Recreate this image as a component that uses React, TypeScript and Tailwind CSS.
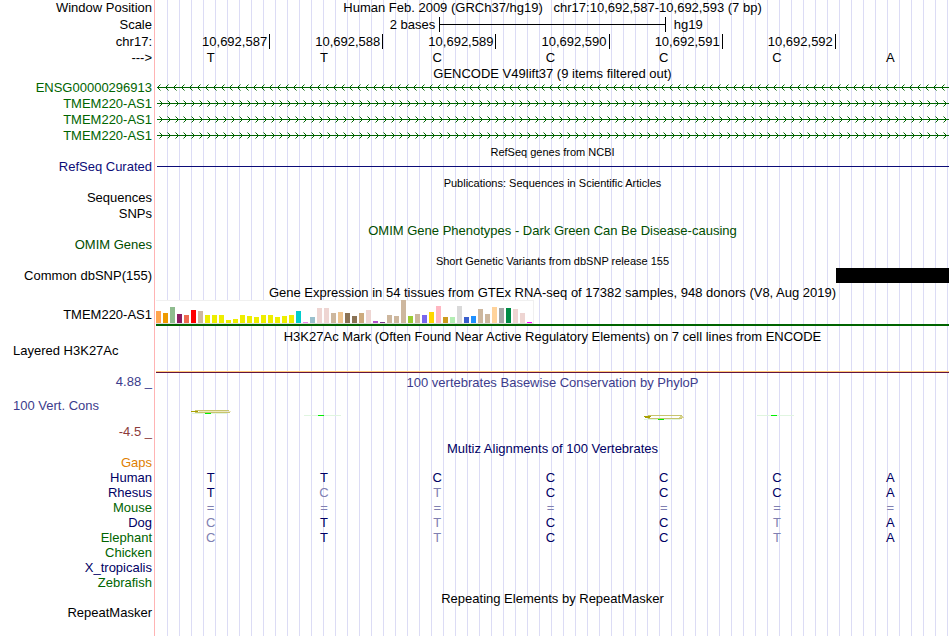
import type { ReactNode } from "react";

const START = 10692587;

const geneTracks = [
  { name: "ENSG00000296913", strand: "-" },
  { name: "TMEM220-AS1", strand: "+" },
  { name: "TMEM220-AS1", strand: "+" },
  { name: "TMEM220-AS1", strand: "+" },
];

// [colour, height in px] for each GTEx tissue
const tissues: [string, number][] = [
  ["#ffa54f", 12], ["#ee9a00", 10], ["#8fbc8f", 16], ["#8b1c62", 9], ["#ee6a50", 8],
  ["#ff0000", 13], ["#cdb79e", 12], ["#eeee00", 8], ["#eeee00", 8], ["#eeee00", 8],
  ["#eeee00", 3], ["#eeee00", 4], ["#eeee00", 8], ["#eeee00", 7], ["#eeee00", 6],
  ["#eeee00", 8], ["#eeee00", 8], ["#eeee00", 6], ["#eeee00", 7], ["#eeee00", 8],
  ["#00cdcd", 12], ["#ee82ee", 1], ["#9ac0cd", 6], ["#eed5d2", 15], ["#eed5d2", 15],
  ["#cdb79e", 10], ["#eec591", 11], ["#8b7355", 10], ["#8b7355", 7], ["#cdaa7d", 10],
  ["#eed5d2", 13], ["#b452cd", 2], ["#7a378b", 1], ["#cdb79e", 8], ["#cdb79e", 7],
  ["#cdb79e", 23], ["#9acd32", 7], ["#cdb79e", 9], ["#7a67ee", 8], ["#ffd700", 11],
  ["#ffb6c1", 17], ["#cd9b1d", 6], ["#b4eeb4", 6], ["#d9d9d9", 17], ["#3a5fcd", 6],
  ["#1e90ff", 7], ["#cdb79e", 14], ["#cdb79e", 9], ["#ffd39b", 16], ["#a6a6a6", 15],
  ["#008b45", 15], ["#eed5d2", 14], ["#eed5d2", 10], ["#ff00ff", 1],
];

// lower case = differs from human, drawn faded
const alignments = [
  { name: "Gaps", bases: "", color: "text-[#e08000]" },
  { name: "Human", bases: "TTCCCCA", color: "text-[#000064]" },
  { name: "Rhesus", bases: "TctCCCA", color: "text-[#000064]" },
  { name: "Mouse", bases: "=======", color: "text-[#006400]" },
  { name: "Dog", bases: "cTtCCtA", color: "text-[#000064]" },
  { name: "Elephant", bases: "cTtCCtA", color: "text-[#006400]" },
  { name: "Chicken", bases: "", color: "text-[#006400]" },
  { name: "X_tropicalis", bases: "", color: "text-[#000064]" },
  { name: "Zebrafish", bases: "", color: "text-[#006400]" },
];

type RowProps = {
  label?: ReactNode;
  color?: string;
  height?: string;
  children?: ReactNode;
};

function Row({ label, color = "text-black", height = "h-4", children }: RowProps) {
  return (
    <div className={`grid grid-cols-[154px_minmax(0,1fr)] ${height}`}>
      <div className={`pr-0.5 text-right ${color}`}>{label}</div>
      <div className="pl-0.5">{children}</div>
    </div>
  );
}

type TitleProps = { children: ReactNode; color?: string; small?: boolean };

function Title({ children, color = "text-black", small = false }: TitleProps) {
  return (
    <Row height="h-[15px]">
      <h2 className={`text-center whitespace-pre ${color} ${small ? "text-[11px]" : "leading-[18px]"}`}>
        {children}
      </h2>
    </Row>
  );
}

function StrandLine({ index, strand }: { index: number; strand: string }) {
  const id = `strand-${index}`;
  return (
    <svg className="block h-4 w-full" shapeRendering="crispEdges" aria-hidden="true">
      <defs>
        <pattern id={id} width="8" height="16" patternUnits="userSpaceOnUse">
          {strand === "-" ? (
            <path d="M1 7h1v1h-1zM2 6h1v1h-1zM2 8h1v1h-1zM3 5h1v1h-1zM3 9h1v1h-1z" fill="#006400" />
          ) : (
            <path d="M6 7h1v1h-1zM5 6h1v1h-1zM5 8h1v1h-1zM4 5h1v1h-1zM4 9h1v1h-1z" fill="#006400" />
          )}
          <path
            d={strand === "-" ? "M4 4h1v1h-1zM4 10h1v1h-1z" : "M3 4h1v1h-1zM3 10h1v1h-1z"}
            fill="#006400"
            fillOpacity="0.5"
          />
        </pattern>
      </defs>
      <rect width="100%" height="16" fill={`url(#${id})`} />
      <rect x="1" y="7" width="100%" height="1" fill="#006400" />
    </svg>
  );
}

function Bases({ bases, color }: { bases: string; color: string }) {
  return (
    <div className={`grid grid-cols-7 text-center ${color}`}>
      {bases.split("").map((base, i) => (
        <span key={i} className={`pr-1 ${/[a-z=]/.test(base) ? "text-[#8080b2]" : ""}`}>
          {base.toUpperCase()}
        </span>
      ))}
    </div>
  );
}

function ConservationMark({ kind }: { kind: string }) {
  if (kind === "none") return null;
  return (
    <svg className="mx-auto block" width="40" height="34" shapeRendering="crispEdges" aria-hidden="true">
      {kind === "dash" && (
        <>
          <rect y="25" width="37" height="1" fill="#e0f5e0" />
          <rect x="14" y="25" width="6" height="1" fill="#00f000" />
        </>
      )}
      {kind === "high" && (
        <>
          <rect y="23" width="36" height="1" fill="#e0f5e0" />
          <path d="M4 20h34v1H4zM4 22h35v1H4z" fill="#c8c46e" />
          <path d="M8 21h28v1H8zM37 21h3v1h-3z" fill="#ece8c0" />
          <rect y="21" width="7" height="1" fill="#a8a000" />
          <rect x="14" y="23" width="6" height="1" fill="#00f000" />
        </>
      )}
      {kind === "low" && (
        <>
          <rect y="29" width="36" height="1" fill="#e0f5e0" />
          <path d="M4 25h34v1H4zM4 28h34v1H4z" fill="#c8c46e" />
          <path d="M36 26h3v1h-3zM35 27h5v1h-5z" fill="#d8d490" />
          <path d="M0 26h7v1H0zM1 27h5v1H1z" fill="#a8a000" />
          <rect x="14" y="29" width="6" height="1" fill="#00f000" />
        </>
      )}
    </svg>
  );
}

export default function App() {
  return (
    <main className="relative min-h-screen bg-white pr-px font-['Liberation_Sans',Arial,sans-serif] text-[13px] leading-4 text-black">
      <div className="absolute inset-y-0 right-px left-[154px] border-l border-[#ffb4b4] pl-px" aria-hidden="true">
        <div className="h-full bg-[repeating-linear-gradient(to_right,transparent_0px,transparent_11px,#dcdcf5_11px,#dcdcf5_12px)]" />
      </div>

      <div className="relative">
        <Row label="Window Position" height="h-[17px]">
          <h1 className="text-center whitespace-pre">
            {"Human Feb. 2009 (GRCh37/hg19)   chr17:10,692,587-10,692,593 (7 bp)"}
          </h1>
        </Row>
        <Row label="Scale" height="h-[17px]">
          <div className="grid grid-cols-[5fr_4fr_5fr] items-start">
            <span className="pr-1 text-right">2 bases</span>
            <span className="flex h-[15px] items-center border-x border-black">
              <span className="h-px w-full bg-black" />
            </span>
            <span className="pl-2">hg19</span>
          </div>
        </Row>
        <Row label="chr17:" height="h-[17px]">
          <div className="grid grid-cols-7 pl-px text-right">
            {[0, 1, 2, 3, 4, 5].map((i) => (
              <span key={i} className="h-[15px] border-r border-black pr-0.5">
                {(START + i).toLocaleString("en-US")}
              </span>
            ))}
          </div>
        </Row>
        <Row label="--->" height="h-[14px] leading-[14px]">
          <Bases bases="TTCCCCA" color="text-black" />
        </Row>

        <Title>GENCODE V49lift37 (9 items filtered out)</Title>
        {geneTracks.map((gene, i) => (
          <Row key={i} label={gene.name} color="text-[#006400]">
            <StrandLine index={i} strand={gene.strand} />
          </Row>
        ))}

        <Title small>RefSeq genes from NCBI</Title>
        <Row label="RefSeq Curated" color="text-[#0c0c78]">
          <div className="flex h-[15px] items-center pl-px">
            <div className="h-px w-full bg-[#0c0c78]" />
          </div>
        </Row>

        <Title small>Publications: Sequences in Scientific Articles</Title>
        <Row label="Sequences" />
        <Row label="SNPs" />

        <Title color="text-[#004d00]">OMIM Gene Phenotypes - Dark Green Can Be Disease-causing</Title>
        <Row label="OMIM Genes" color="text-[#004d00]" />

        <Title small>Short Genetic Variants from dbSNP release 155</Title>
        <Row label="Common dbSNP(155)">
          <div className="grid grid-cols-7">
            <div className="col-start-7 h-[15px] bg-black" />
          </div>
        </Row>

        <Title>Gene Expression in 54 tissues from GTEx RNA-seq of 17382 samples, 948 donors (V8, Aug 2019)</Title>
        <Row label={<span className="block pt-2">TMEM220-AS1</span>} height="h-[29px]">
          <div className="border-b-2 border-[#006400] pt-px">
            <div className="flex h-6 w-[378px] items-end gap-0.5 border-t border-r border-b border-t-[#f0f0f0] border-r-[#f0f0f0] border-b-[#dcdcdc] bg-white">
              {tissues.map(([color, height], i) => (
                <div key={i} className="w-[5px] shrink-0" style={{ height, backgroundColor: color }} />
              ))}
            </div>
          </div>
        </Row>

        <Title>H3K27Ac Mark (Often Found Near Active Regulatory Elements) on 7 cell lines from ENCODE</Title>
        <Row label={<span className="block pl-[13px] text-left">Layered H3K27Ac</span>} height="h-[31px]">
          <div className="h-[30px] border-b border-[#64143c]">
            <div className="h-[29px] border-b border-[#ffc878]" />
          </div>
        </Row>

        <Row label="4.88 _" color="text-[#3c3c8c]">
          <h2 className="text-center leading-[18px] text-[#3c3c8c]">100 vertebrates Basewise Conservation by PhyloP</h2>
        </Row>
        <Row
          label={<span className="block pt-2 pl-[13px] text-left">100 Vert. Cons</span>}
          color="text-[#3c3c8c]"
          height="h-[34px]"
        >
          <div className="grid grid-cols-7">
            {["high", "dash", "none", "none", "low", "dash", "none"].map((kind, i) => (
              <span key={i} className="pr-1">
                <ConservationMark kind={kind} />
              </span>
            ))}
          </div>
        </Row>
        <Row label="-4.5 _" color="text-[#8c3c3c]" />

        <Title color="text-[#000064]">Multiz Alignments of 100 Vertebrates</Title>
        {alignments.map((row) => (
          <Row key={row.name} label={row.name} color={row.color} height="h-[15px]">
            <Bases bases={row.bases} color="text-[#000064]" />
          </Row>
        ))}

        <Title>Repeating Elements by RepeatMasker</Title>
        <Row label="RepeatMasker" />
      </div>
    </main>
  );
}
